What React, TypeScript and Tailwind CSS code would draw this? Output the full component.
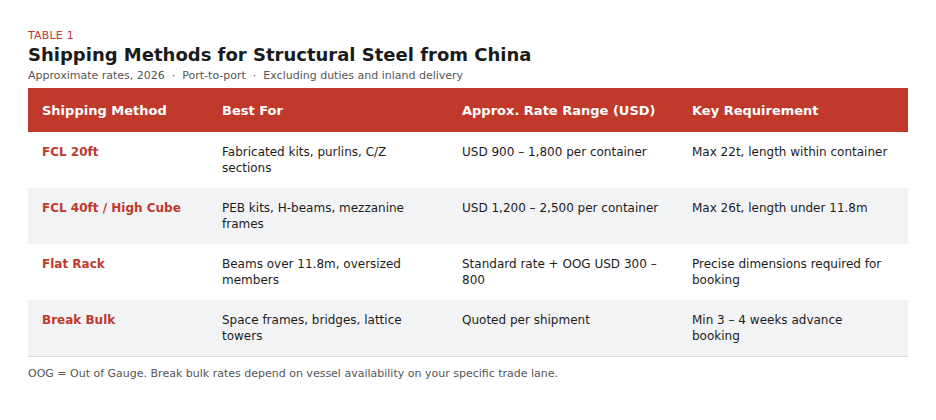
import React from 'react';

interface Row {
  method: string;
  bestFor: string;
  rate: string;
  requirement: string;
}

const rows: Row[] = [
  {
    method: 'FCL 20ft',
    bestFor: 'Fabricated kits, purlins, C/Z sections',
    rate: 'USD 900 – 1,800 per container',
    requirement: 'Max 22t, length within container',
  },
  {
    method: 'FCL 40ft / High Cube',
    bestFor: 'PEB kits, H-beams, mezzanine frames',
    rate: 'USD 1,200 – 2,500 per container',
    requirement: 'Max 26t, length under 11.8m',
  },
  {
    method: 'Flat Rack',
    bestFor: 'Beams over 11.8m, oversized members',
    rate: 'Standard rate + OOG USD 300 – 800',
    requirement: 'Precise dimensions required for booking',
  },
  {
    method: 'Break Bulk',
    bestFor: 'Space frames, bridges, lattice towers',
    rate: 'Quoted per shipment',
    requirement: 'Min 3 – 4 weeks advance booking',
  },
];

export default function App() {
  return (
    <div
      className="min-h-screen bg-white px-[28px] pt-[29px] text-[#1c1c1c]"
      style={{ fontFamily: '"DejaVu Sans", Verdana, sans-serif' }}
    >
      <p className="text-[11px] leading-[14px] uppercase tracking-[0.2px] text-[#c0392b]">Table 1</p>
      <h1 className="mt-0 text-[18px] leading-[24px] font-bold text-[#1a1a1a]">
        Shipping Methods for Structural Steel from China
      </h1>
      <p className="mt-[2px] text-[11px] leading-[14px] text-[#555]">
        Approximate rates, 2026 &nbsp;·&nbsp; Port-to-port &nbsp;·&nbsp; Excluding duties and inland delivery
      </p>

      <table className="mt-[5px] w-[880px] table-fixed border-collapse border-b border-[#d9dbe0]">
        <colgroup>
          <col className="w-[180px]" />
          <col className="w-[240px]" />
          <col className="w-[230px]" />
          <col className="w-[230px]" />
        </colgroup>
        <thead>
          <tr className="bg-[#c0392b] text-white">
            <th className="h-[44px] px-[14px] pt-[2px] text-left text-[13px] font-bold">Shipping Method</th>
            <th className="h-[44px] px-[14px] pt-[2px] text-left text-[13px] font-bold">Best For</th>
            <th className="h-[44px] px-[14px] pt-[2px] text-left text-[13px] font-bold">Approx. Rate Range (USD)</th>
            <th className="h-[44px] px-[14px] pt-[2px] text-left text-[13px] font-bold">Key Requirement</th>
          </tr>
        </thead>
        <tbody>
          {rows.map((r, i) => (
            <tr key={r.method} className={i % 2 === 1 ? 'bg-[#f2f3f5]' : 'bg-white'}>
              <td className="h-[56px] px-[14px] pt-[12px] pb-[12px] align-top text-[12px] leading-[16px] font-bold text-[#c0392b]">
                {r.method}
              </td>
              <td className="h-[56px] px-[14px] pt-[12px] pb-[12px] align-top text-[12px] leading-[16px]">{r.bestFor}</td>
              <td className="h-[56px] px-[14px] pt-[12px] pb-[12px] align-top text-[12px] leading-[16px]">{r.rate}</td>
              <td className="h-[56px] px-[14px] pt-[12px] pb-[12px] align-top text-[12px] leading-[16px]">{r.requirement}</td>
            </tr>
          ))}
        </tbody>
      </table>

      <p className="mt-[10px] text-[11px] leading-[14px] text-[#555]">
        OOG = Out of Gauge. Break bulk rates depend on vessel availability on your specific trade lane.
      </p>
    </div>
  );
}
